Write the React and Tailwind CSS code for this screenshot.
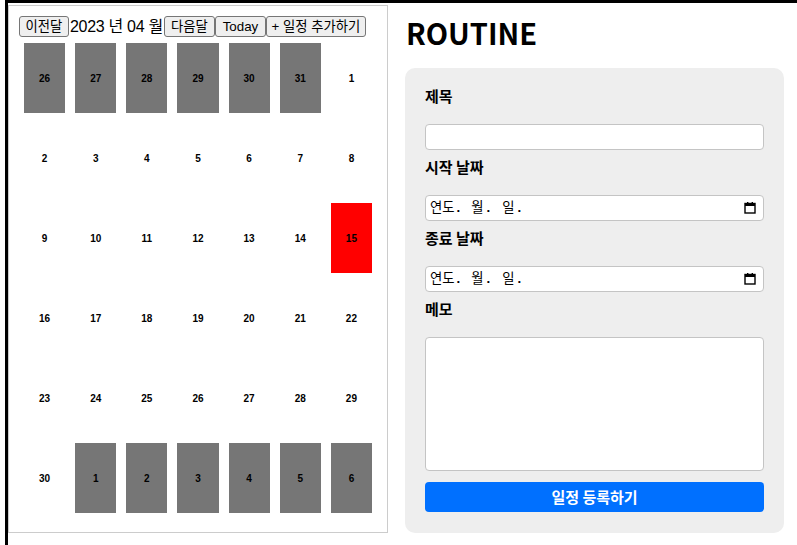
import React from "react";

const rows = [
  [[26, "o"], [27, "o"], [28, "o"], [29, "o"], [30, "o"], [31, "o"], [1, ""]],
  [[2, ""], [3, ""], [4, ""], [5, ""], [6, ""], [7, ""], [8, ""]],
  [[9, ""], [10, ""], [11, ""], [12, ""], [13, ""], [14, ""], [15, "t"]],
  [[16, ""], [17, ""], [18, ""], [19, ""], [20, ""], [21, ""], [22, ""]],
  [[23, ""], [24, ""], [25, ""], [26, ""], [27, ""], [28, ""], [29, ""]],
  [[30, ""], [1, "o"], [2, "o"], [3, "o"], [4, "o"], [5, "o"], [6, "o"]],
];

function Btn({ children, w }) {
  return (
    <button
      className={
        "h-[21px] shrink-0 px-0 bg-[#efefef] border border-[#767676] rounded-[3px] text-[13.33px] leading-[19px] text-black whitespace-nowrap text-center font-['Liberation_Sans','Noto_Sans_CJK_KR',sans-serif] " +
        w
      }
    >
      {children}
    </button>
  );
}

function CalIcon() {
  return (
    <svg width="12" height="12" viewBox="0 0 12 12" className="shrink-0">
      <rect x="1" y="1.5" width="10" height="9.5" fill="none" stroke="#000" strokeWidth="1.4" />
      <rect x="1" y="1.5" width="10" height="2.5" fill="#000" />
      <rect x="3" y="0" width="1.4" height="2" fill="#000" />
      <rect x="7.6" y="0" width="1.4" height="2" fill="#000" />
    </svg>
  );
}

function DateField() {
  return (
    <div className="h-[26px] bg-white border border-[#c4c4c4] rounded-[4px] flex items-center pl-[4px] pr-[7px] text-[13.33px] text-black font-['Liberation_Sans','Noto_Sans_CJK_KR',sans-serif]">
      <span>연도</span>
      <span className="font-bold ml-[2px]">.</span>
      <span className="ml-[11px]">월</span>
      <span className="font-bold ml-[3px]">.</span>
      <span className="ml-[12px]">일</span>
      <span className="font-bold ml-[3px]">.</span>
      <span className="flex-1" />
      <CalIcon />
    </div>
  );
}

function Label({ children }) {
  return (
    <div className="h-[22px] leading-[22px] text-[15px] font-bold text-black mb-[17px] font-['Noto_Sans_CJK_KR','Noto_Sans',sans-serif]">
      {children}
    </div>
  );
}

export default function App() {
  return (
    <div className="w-[797px] h-[545px] overflow-hidden bg-white">
      <div className="ml-[5px] h-[545px] border-t-[3px] border-l-[3px] border-black flex items-start">
        <div className="mt-[2px] w-[380px] h-[528px] shrink-0 border border-[#cccccc] pt-[10px] px-[10px] flex flex-col">
          <div className="flex items-center h-[21px]">
            <Btn w="w-[50px]">이전달</Btn>
            <span className="w-[95px] shrink-0 pl-[1px] whitespace-nowrap text-[16px] leading-[21px] text-black tracking-[-0.3px] font-['Liberation_Sans','Noto_Sans_CJK_KR',sans-serif]">
              2023 년 04 월
            </span>
            <Btn w="w-[51px]">다음달</Btn>
            <Btn w="w-[51px]">Today</Btn>
            <Btn w="w-[100px]">+ 일정 추가하기</Btn>
          </div>
          <div className="mt-[1px] w-[358px] grid grid-cols-7">
            {rows.flat().map(([d, k], i) => (
              <div key={i} className="h-[80px] p-[5px]">
                <div
                  className={
                    "h-full flex items-center justify-center text-[10px] font-bold text-black font-['Liberation_Sans',sans-serif] " +
                    (k === "o" ? "bg-[#767676]" : k === "t" ? "bg-[#ff0000]" : "")
                  }
                >
                  {d}
                </div>
              </div>
            ))}
          </div>
        </div>

        <div className="ml-[17px] w-[379px] flex flex-col">
          <h1 className="mt-[9px] h-[40px] leading-[40px] text-[29px] font-bold text-black pl-[1px] font-['Noto_Sans_CJK_KR','Noto_Sans',sans-serif]">
            ROUTINE
          </h1>
          <div className="mt-[16px] h-[465px] bg-[#eeeeee] rounded-[10px] pt-[17px] px-[20px] flex flex-col">
            <Label>제목</Label>
            <div className="h-[26px] bg-white border border-[#c4c4c4] rounded-[4px] mb-[6px]" />
            <Label>시작 날짜</Label>
            <DateField />
            <div className="h-[6px]" />
            <Label>종료 날짜</Label>
            <DateField />
            <div className="h-[6px]" />
            <Label>메모</Label>
            <div className="h-[134px] bg-white border border-[#c4c4c4] rounded-[4px]" />
            <button className="mt-[11px] h-[30px] rounded-[4px] bg-[#0070ff] text-white text-[15px] font-bold font-['Noto_Sans_CJK_KR','Noto_Sans',sans-serif]">
              일정 등록하기
            </button>
          </div>
        </div>
      </div>
    </div>
  );
}
